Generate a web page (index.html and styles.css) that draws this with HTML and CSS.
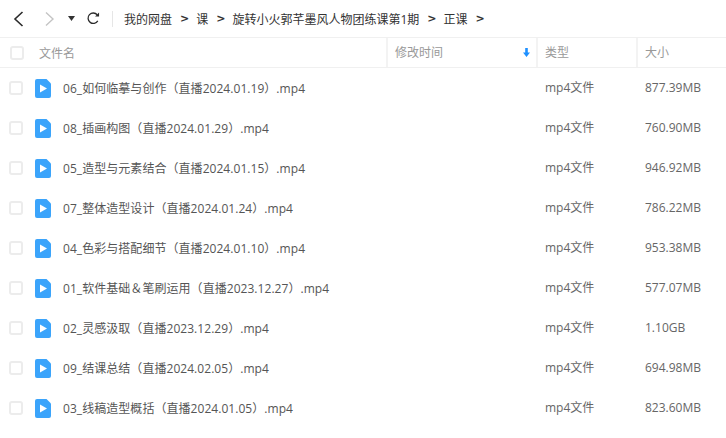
FILE: index.html
```html
<!DOCTYPE html>
<html>
<head>
    <title>正课</title>
    <meta charset="utf-8">
    <link rel="stylesheet" href="styles.css">
</head>
<body>
    <div class="toolbar">
        <svg class="nav-icon" width="14" height="16" viewBox="0 0 14 16"><path d="M11.5 1 4 8l7.5 7" fill="none" stroke="#2b2b2b" stroke-width="1.6"/></svg>
        <svg class="nav-icon next" width="14" height="16" viewBox="0 0 14 16"><path d="M3 1.5 10 8l-7 6.5" fill="none" stroke="#c4c4c4" stroke-width="1.4"/></svg>
        <svg class="nav-icon drop" width="7" height="5" viewBox="0 0 7 5"><path d="M0 0h7L3.5 5z" fill="#333"/></svg>
        <svg class="nav-icon refresh" width="13" height="13" viewBox="0 0 14 14"><path d="M11.6 9.5A5.6 5.6 0 1 1 11 3" fill="none" stroke="#2b2b2b" stroke-width="1.4"/><path d="M13 .5v4.3H8.7z" fill="#2b2b2b"/></svg>
        <div class="divider"></div>
        <div class="crumbs">
            <span>我的网盘</span><b>&gt;</b>
            <span>课</span><b>&gt;</b>
            <span>旋转小火郭芊墨风人物团练课第1期</span><b>&gt;</b>
            <span>正课</span><b>&gt;</b>
        </div>
    </div>

    <div class="head">
        <div class="col-name"><i class="check"></i><span class="name-label">文件名</span></div>
        <div class="col-time">修改时间
            <svg width="7" height="9" viewBox="0 0 7 9"><path d="M2.2 0h2.6v4.5H7L3.5 9 0 4.5h2.2z" fill="#1e90ff"/></svg>
        </div>
        <div class="col-type">类型</div>
        <div class="col-size">大小</div>
    </div>

    <div class="list" id="list"></div>

    <script src="list.js"></script>
</body>
</html>
```

FILE: list.js
```js
var files = [
    ['06_如何临摹与创作（直播2024.01.19）.mp4', '877.39MB'],
    ['08_插画构图（直播2024.01.29）.mp4', '760.90MB'],
    ['05_造型与元素结合（直播2024.01.15）.mp4', '946.92MB'],
    ['07_整体造型设计（直播2024.01.24）.mp4', '786.22MB'],
    ['04_色彩与搭配细节（直播2024.01.10）.mp4', '953.38MB'],
    ['01_软件基础＆笔刷运用（直播2023.12.27）.mp4', '577.07MB'],
    ['02_灵感汲取（直播2023.12.29）.mp4', '1.10GB'],
    ['09_结课总结（直播2024.02.05）.mp4', '694.98MB'],
    ['03_线稿造型概括（直播2024.01.05）.mp4', '823.60MB']
];

var icon = '<svg class="file-icon" width="16" height="19" viewBox="0 0 16 19">' +
    '<path d="M2 0h9.5L16 4.5V17a2 2 0 0 1-2 2H2a2 2 0 0 1-2-2V2a2 2 0 0 1 2-2z" fill="#3ba4fb"/>' +
    '<path d="M5 5.5 12 9.5 5 13.5z" fill="#fff"/></svg>';

var list = document.getElementById('list');
files.forEach(function (f) {
    var row = document.createElement('div');
    row.className = 'row';
    row.innerHTML = '<div class="col-name"><i class="check"></i>' + icon +
        '<span class="file-name">' + f[0] + '</span></div>' +
        '<div class="col-time"></div>' +
        '<div class="col-type">mp4文件</div>' +
        '<div class="col-size">' + f[1] + '</div>';
    list.appendChild(row);
});
```

FILE: styles.css
```css
body {
    margin: 0;
    font-family: "Open Sans", "Noto Sans CJK SC", sans-serif;
    font-size: 12px;
    color: #666;
    background: #fff;
    overflow: hidden;
}

.toolbar {
    display: flex;
    align-items: center;
    height: 37px;
    border-bottom: 1px solid #f0f0f0;
}

.nav-icon {
    flex: none;
    margin-left: 11px;
}

.nav-icon.next {
    margin-left: 18px;
}

.nav-icon.drop {
    margin-left: 11px;
}

.nav-icon.refresh {
    margin-left: 12px;
}

.divider {
    width: 1px;
    height: 16px;
    background: #e6e6e6;
    margin: 0 11px 0 12px;
}

.crumbs {
    display: flex;
    align-items: center;
    color: #333;
}

.crumbs b {
    font-weight: bold;
    font-family: "DejaVu Sans", sans-serif;
    font-size: 11px;
    margin: 0 7px 0 8px;
}

.head,
.row {
    display: flex;
    align-items: center;
}

.head {
    height: 29px;
    border-bottom: 1px solid #f0f0f0;
    color: #999;
}

.row {
    height: 40px;
}

.col-name {
    display: flex;
    align-items: center;
    width: 386px;
    height: 100%;
    padding-left: 9px;
    box-sizing: border-box;
}

.col-time {
    display: flex;
    align-items: center;
    justify-content: space-between;
    width: 150px;
    height: 100%;
    padding: 0 6px 0 7px;
    box-sizing: border-box;
}

.col-type {
    width: 100px;
    height: 100%;
    padding-left: 9px;
    line-height: 40px;
    box-sizing: border-box;
}

.col-size {
    flex: 1;
    height: 100%;
    padding-left: 9px;
    line-height: 40px;
    box-sizing: border-box;
}

.head .col-time,
.head .col-type,
.head .col-size {
    border-left: 2px solid #f3f3f3;
    line-height: 29px;
    padding-left: 7px;
}

.check {
    display: block;
    flex: none;
    width: 10px;
    height: 10px;
    border: 2px solid #ececec;
    border-radius: 3px;
}

.head .check {
    margin-left: 1px;
}

.name-label {
    margin-left: 15px;
}

.file-icon {
    margin-left: 12px;
    flex: none;
}

.file-name {
    margin-left: 12px;
    color: #555;
    letter-spacing: 0.05px;
}
```
